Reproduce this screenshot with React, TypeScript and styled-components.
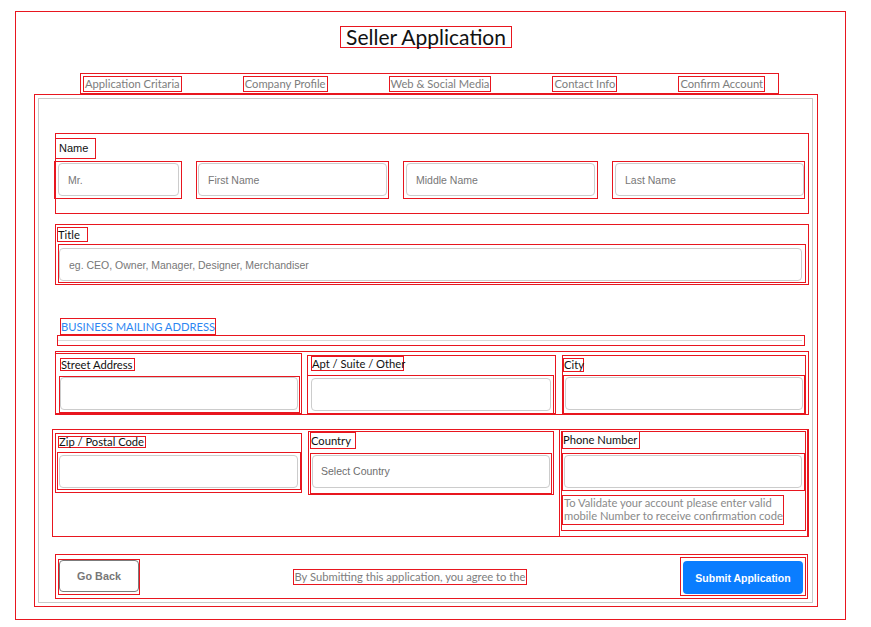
import React from "react";
import styled, { createGlobalStyle, css } from "styled-components";

const RED = "#e8161f";

const Global = createGlobalStyle`
  * { box-sizing: border-box; }
  body { margin: 0; background: #fff; font-family: Lato, "Open Sans", sans-serif; }
`;

const redBox = css`
  border: 1px solid ${RED};
`;

const Frame = styled.div`
  ${redBox};
  margin: 11px 0 0 15px;
  width: 831px;
  height: 609px;
  display: flex;
  flex-direction: column;
  align-items: flex-start;
`;

const Heading = styled.h1`
  ${redBox};
  margin: 14px 0 0 324px;
  width: 172px;
  height: 22px;
  font-family: Lato, sans-serif;
  font-weight: 400;
  font-size: 21px;
  line-height: 19px;
  color: #111;
  text-align: center;
`;

const Tabs = styled.nav`
  ${redBox};
  margin: 25px 0 0 64px;
  width: 699px;
  height: 21px;
  display: flex;
  gap: 61px;
  padding: 2px 0 0 2px;
`;

const Tab = styled.span`
  ${redBox};
  height: 16px;
  padding: 0 1px;
  font-size: 11.2px;
  line-height: 14px;
  color: #7d7d7d;
  white-space: nowrap;
`;

const Card = styled.div`
  ${redBox};
  margin-left: 18px;
  width: 784px;
  height: 513px;
  padding: 3px 4px 3px 3px;
`;

const Inner = styled.div`
  border: 1px solid #c9c9c9;
  height: 100%;
  padding: 34px 0 0 16px;
  display: flex;
  flex-direction: column;
  align-items: flex-start;
`;

const Group = styled.div<{ $h: number; $mt?: number; $w?: number; $ml?: number }>`
  ${redBox};
  width: ${(p) => p.$w ?? 754}px;
  height: ${(p) => p.$h}px;
  margin-top: ${(p) => p.$mt ?? 0}px;
  margin-left: ${(p) => p.$ml ?? 0}px;
  display: flex;
  flex-direction: column;
  align-items: flex-start;
`;

const Label = styled.label<{ $w: number; $h: number; $mt?: number; $ml?: number; $arial?: boolean }>`
  ${redBox};
  display: block;
  flex: none;
  width: ${(p) => p.$w}px;
  height: ${(p) => p.$h}px;
  margin-top: ${(p) => p.$mt ?? 0}px;
  margin-left: ${(p) => p.$ml ?? 0}px;
  font-family: ${(p) => (p.$arial ? '"Liberation Sans", Arial, sans-serif' : "Lato, sans-serif")};
  font-size: ${(p) => (p.$arial ? 11 : 11.2)}px;
  line-height: ${(p) => p.$h - 2}px;
  color: #111;
  white-space: nowrap;
  overflow: visible;
  padding-left: ${(p) => (p.$arial ? 3 : 0)}px;
`;

const NameGrid = styled.div`
  display: grid;
  grid-template-columns: 128px 193px 195px 193px;
  column-gap: 14px;
  margin: 2px 0 0 -2px;
  align-items: center;
`;

const InputWrap = styled.div<{ $w?: number; $h: number; $mt?: number; $ml?: number; $pt?: number; $pl?: number }>`
  ${redBox};
  flex: none;
  width: ${(p) => (p.$w ? `${p.$w}px` : "auto")};
  height: ${(p) => p.$h}px;
  margin-top: ${(p) => p.$mt ?? 0}px;
  margin-left: ${(p) => p.$ml ?? 0}px;
  padding-top: ${(p) => p.$pt ?? 1}px;
  padding-left: ${(p) => p.$pl ?? 1}px;
`;

const Input = styled.input<{ $w?: number }>`
  display: block;
  width: ${(p) => (p.$w ? `${p.$w}px` : "calc(100% - 1px)")};
  height: 33px;
  border: 1px solid #cccccc;
  border-radius: 4px;
  padding: 0 0 0 9px;
  font-family: "Liberation Sans", Arial, sans-serif;
  font-size: 10.5px;
  color: #333;
  background: #fff;
  outline: none;
  &::placeholder { color: #777777; }
`;

const SelectBox = styled.div`
  width: 238px;
  height: 33px;
  border: 1px solid #cccccc;
  border-radius: 4px;
  padding-left: 8px;
  font-family: "Liberation Sans", Arial, sans-serif;
  font-size: 10.5px;
  line-height: 31px;
  color: #6e6e6e;
`;

const SectionTitle = styled.h2`
  ${redBox};
  margin: 33px 0 0 5px;
  width: 156px;
  height: 17px;
  font-family: Lato, sans-serif;
  font-weight: 400;
  font-size: 11.2px;
  line-height: 15px;
  color: #2d86f2;
  white-space: nowrap;
`;

const Divider = styled.div`
  ${redBox};
  margin: 0 0 0 2px;
  width: 748px;
  height: 11px;
  padding-top: 4px;
  &::after {
    content: "";
    display: block;
    width: 744px;
    border-top: 1px solid #d9d9d9;
  }
`;

const Row = styled.div<{ $h: number; $mt: number; $ml?: number; $w?: number }>`
  ${redBox};
  width: ${(p) => p.$w ?? 754}px;
  height: ${(p) => p.$h}px;
  margin-top: ${(p) => p.$mt}px;
  margin-left: ${(p) => p.$ml ?? 0}px;
  display: flex;
  align-items: flex-start;
`;

const Col = styled.div<{ $w: number; $h: number; $mt?: number; $ml?: number }>`
  ${redBox};
  flex: none;
  width: ${(p) => p.$w}px;
  height: ${(p) => p.$h}px;
  margin-top: ${(p) => p.$mt ?? 0}px;
  margin-left: ${(p) => p.$ml ?? 0}px;
  display: flex;
  flex-direction: column;
  align-items: flex-start;
`;

const Helper = styled.p`
  ${redBox};
  margin: 4px 0 0 0;
  width: 222px;
  height: 30px;
  padding-left: 1px;
  font-family: Lato, sans-serif;
  font-size: 11.2px;
  line-height: 13px;
  color: #8a8a8a;
`;

const Footer = styled.div`
  ${redBox};
  margin-top: 17px;
  width: 753px;
  height: 45px;
  padding: 0 1px 0 2px;
  display: flex;
  align-items: center;
  justify-content: space-between;
`;

const BtnWrap = styled.div<{ $w: number; $h: number; $pad: string }>`
  ${redBox};
  width: ${(p) => p.$w}px;
  height: ${(p) => p.$h}px;
  padding: ${(p) => p.$pad};
`;

const GhostButton = styled.button`
  display: block;
  width: 80px;
  height: 32px;
  border: 1px solid #7b7b7b;
  border-radius: 4px;
  background: #fff;
  font-family: "Liberation Sans", Arial, sans-serif;
  font-weight: 700;
  font-size: 10.8px;
  color: #777;
  padding: 0;
`;

const PrimaryButton = styled.button`
  display: block;
  width: 120px;
  height: 33px;
  border: none;
  border-radius: 4px;
  background: #0a7dff;
  font-family: "Liberation Sans", Arial, sans-serif;
  font-weight: 700;
  font-size: 10.5px;
  color: #fff;
  padding: 0;
`;

const Note = styled.span`
  ${redBox};
  height: 16px;
  padding: 0 1px;
  font-family: Lato, sans-serif;
  font-size: 11.2px;
  line-height: 14px;
  color: #7d7d7d;
  white-space: nowrap;
`;

const tabs = ["Application Critaria", "Company Profile", "Web & Social Media", "Contact Info", "Confirm Account"];

export default function App() {
  return (
    <>
      <Global />
      <Frame>
        <Heading>Seller Application</Heading>
        <Tabs>
          {tabs.map((t) => (
            <Tab key={t}>{t}</Tab>
          ))}
        </Tabs>
        <Card>
          <Inner>
            <Group $h={81}>
              <Label $w={41} $h={21} $mt={4} $ml={-1} $arial>
                Name
              </Label>
              <NameGrid>
                <InputWrap $h={38} $pt={1} $pl={3}>
                  <Input placeholder="Mr." $w={121} />
                </InputWrap>
                <InputWrap $h={38} $pt={1} $pl={1}>
                  <Input placeholder="First Name" />
                </InputWrap>
                <InputWrap $h={38} $pt={1} $pl={2}>
                  <Input placeholder="Middle Name" $w={189} />
                </InputWrap>
                <InputWrap $h={38} $pt={1} $pl={2}>
                  <Input placeholder="Last Name" $w={189} />
                </InputWrap>
              </NameGrid>
            </Group>

            <Group $h={61} $mt={10}>
              <Label $w={31} $h={15} $mt={2} $ml={1}>
                Title
              </Label>
              <InputWrap $w={748} $h={39} $mt={2} $ml={2} $pt={3} $pl={0}>
                <Input placeholder="eg. CEO, Owner, Manager, Designer, Merchandiser" $w={743} />
              </InputWrap>
            </Group>

            <SectionTitle>BUSINESS MAILING ADDRESS</SectionTitle>
            <Divider />

            <Row $h={64} $mt={5}>
              <Col $w={247} $h={61} $mt={1} $ml={-1}>
                <Label $w={75} $h={13} $mt={4} $ml={4}>
                  Street Address
                </Label>
                <InputWrap $w={241} $h={37} $mt={5} $ml={3} $pt={0} $pl={0}>
                  <Input $w={238} />
                </InputWrap>
              </Col>
              <Col $w={249} $h={59} $mt={3} $ml={5}>
                <Label $w={93} $h={15} $mt={0} $ml={3}>
                  Apt / Suite / Other
                </Label>
                <InputWrap $w={247} $h={40} $mt={4} $ml={-1} $pt={2} $pl={3}>
                  <Input $w={240} />
                </InputWrap>
              </Col>
              <Col $w={244} $h={60} $mt={3} $ml={6}>
                <Label $w={21} $h={14} $mt={2} $ml={0}>
                  City
                </Label>
                <InputWrap $w={242} $h={39} $mt={3} $ml={0} $pt={1} $pl={1}>
                  <Input $w={238} />
                </InputWrap>
              </Col>
            </Row>

            <Row $h={108} $mt={14} $ml={-3} $w={757}>
              <Col $w={247} $h={60} $mt={3} $ml={2}>
                <Label $w={88} $h={12} $mt={2} $ml={2}>
                  Zip / Postal Code
                </Label>
                <InputWrap $w={244} $h={38} $mt={4} $ml={1} $pt={2} $pl={1}>
                  <Input $w={239} />
                </InputWrap>
              </Col>
              <Col $w={246} $h={64} $mt={1} $ml={6}>
                <Label $w={46} $h={17} $mt={0} $ml={1}>
                  Country
                </Label>
                <InputWrap $w={242} $h={41} $mt={4} $ml={1} $pt={1} $pl={1}>
                  <SelectBox>Select Country</SelectBox>
                </InputWrap>
              </Col>
              <Col $w={249} $h={108} $mt={-1} $ml={5}>
                <Col $w={245} $h={100} $mt={1} $ml={1}>
                  <Label $w={78} $h={18} $mt={-1} $ml={0}>
                    Phone Number
                  </Label>
                  <InputWrap $w={243} $h={38} $mt={4} $ml={0} $pt={1} $pl={1}>
                    <Input $w={238} />
                  </InputWrap>
                  <Helper>
                    To Validate your account please enter valid mobile Number to receive confirmation code
                  </Helper>
                </Col>
              </Col>
            </Row>

            <Footer>
              <BtnWrap $w={82} $h={36} $pad="0">
                <GhostButton>Go Back</GhostButton>
              </BtnWrap>
              <Note>By Submitting this application, you agree to the</Note>
              <BtnWrap $w={126} $h={39} $pad="3px 2px 2px 2px">
                <PrimaryButton>Submit Application</PrimaryButton>
              </BtnWrap>
            </Footer>
          </Inner>
        </Card>
      </Frame>
    </>
  );
}
